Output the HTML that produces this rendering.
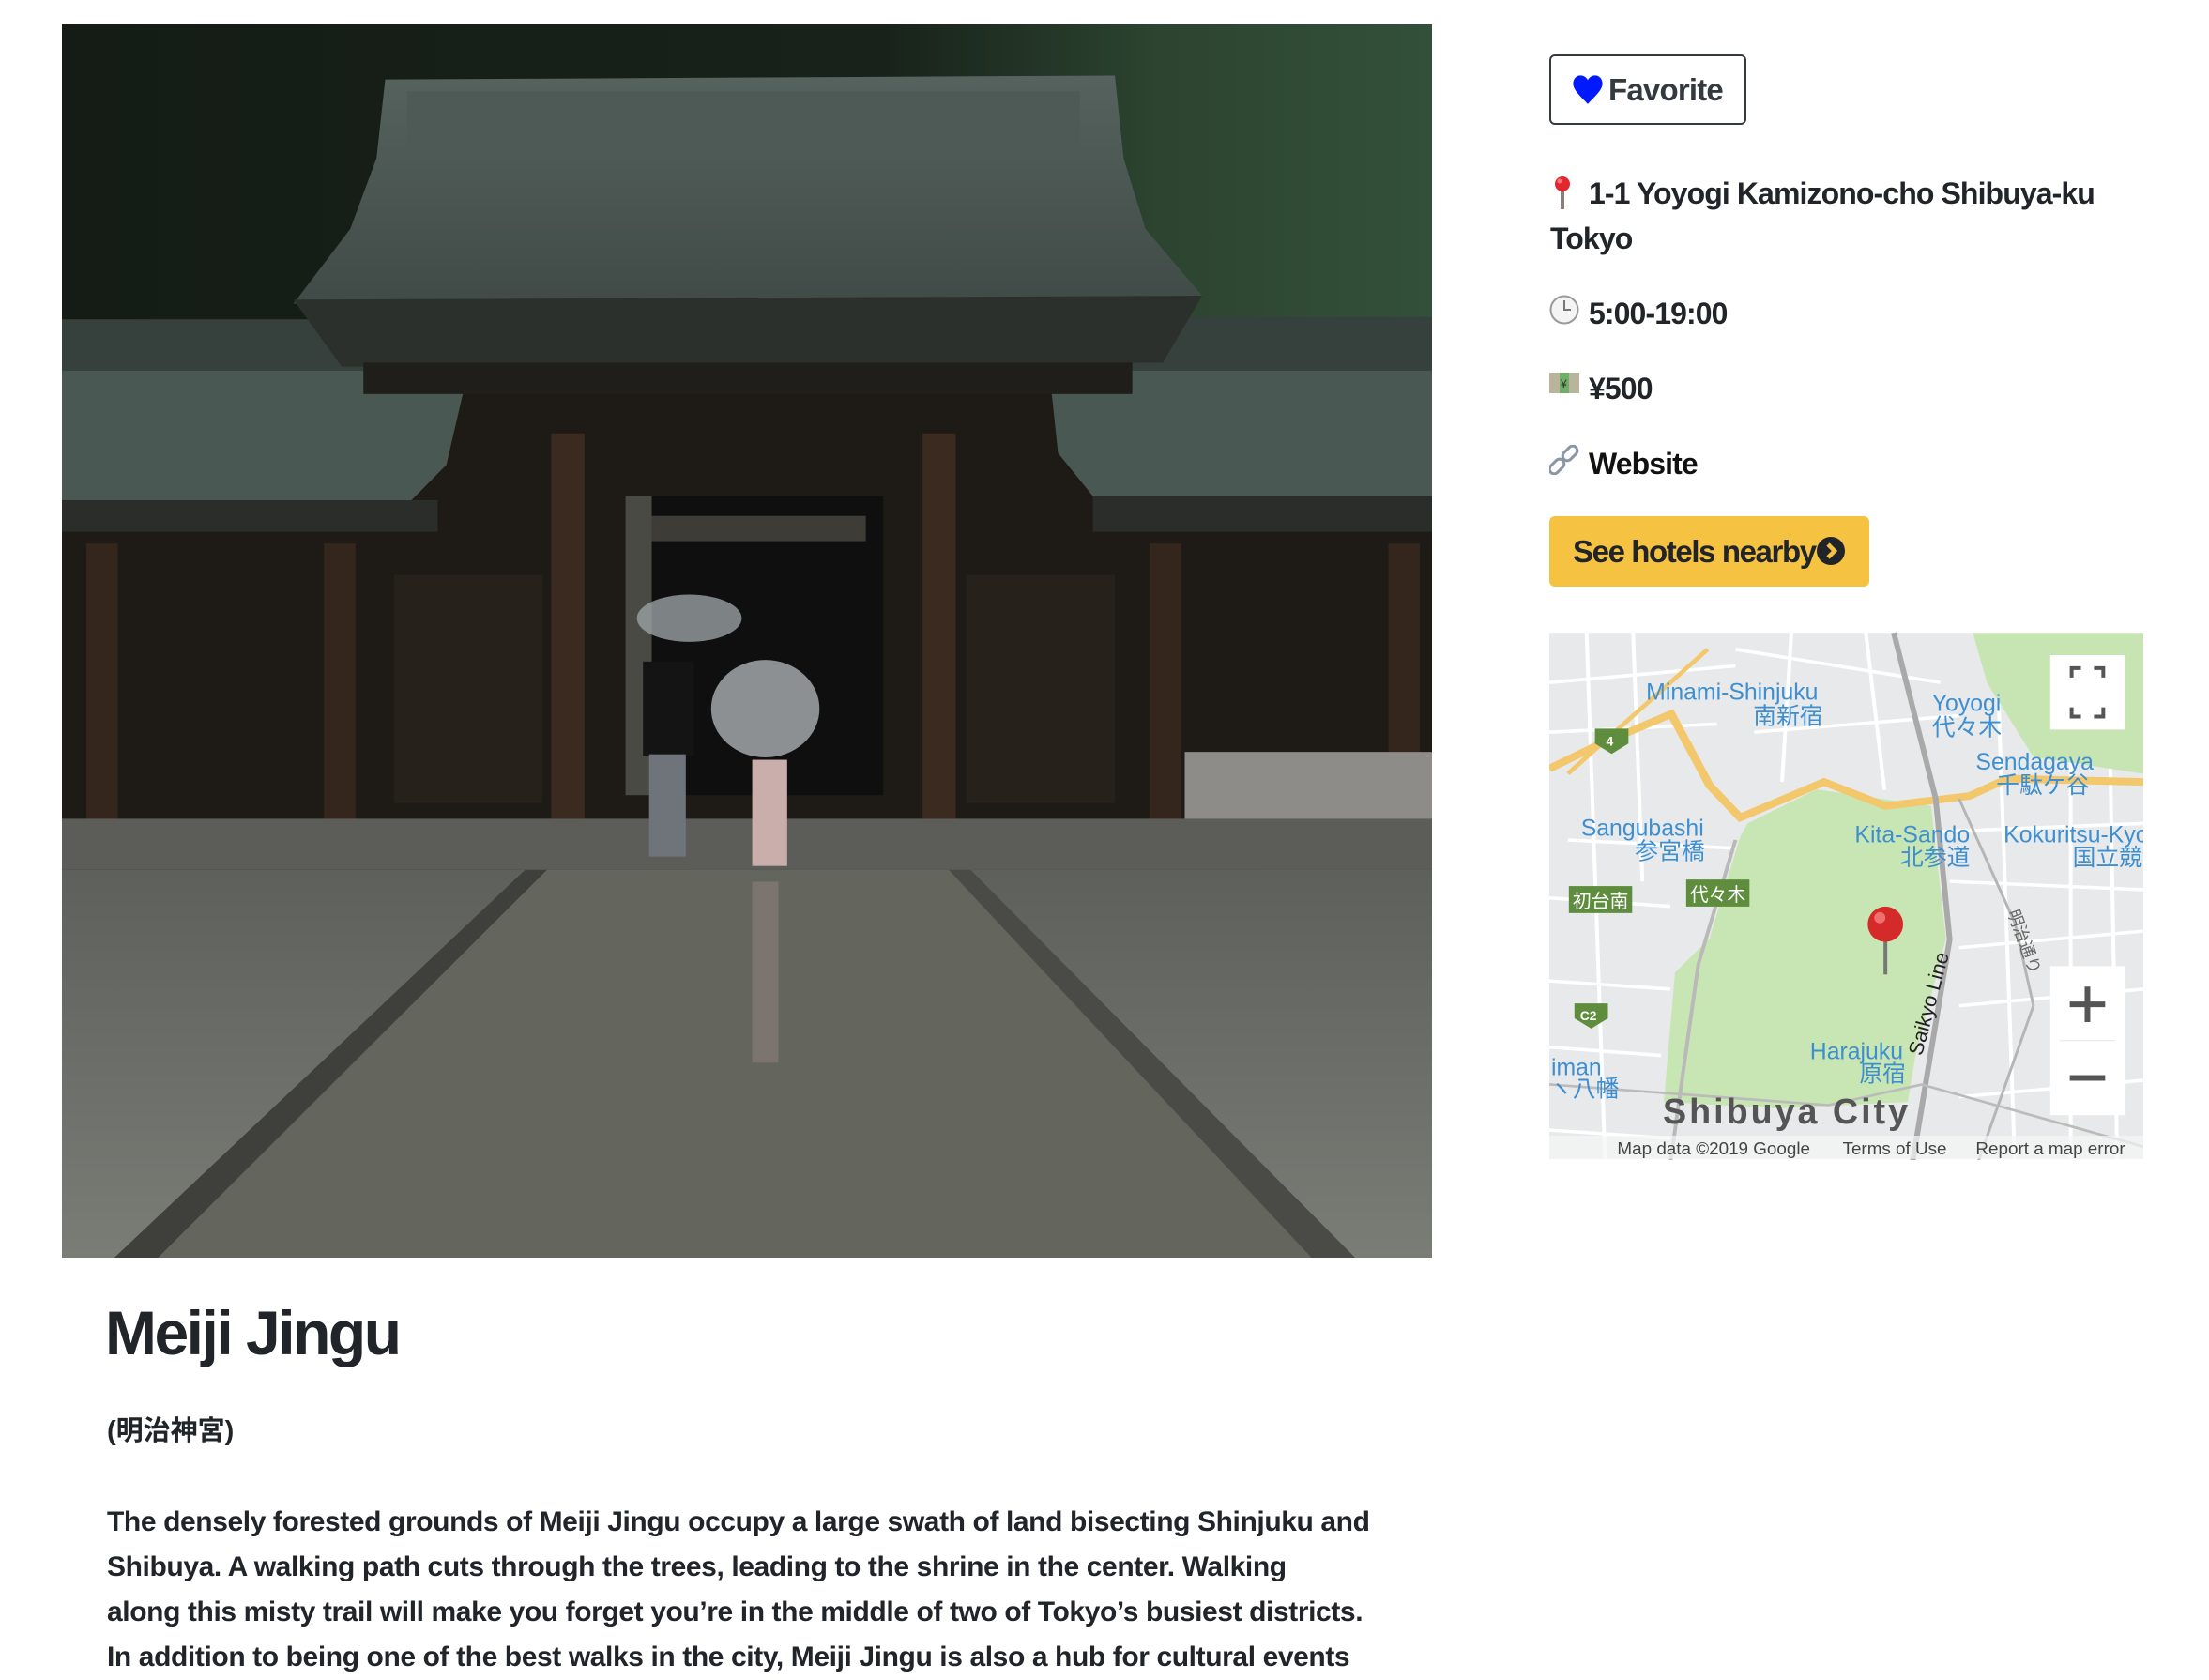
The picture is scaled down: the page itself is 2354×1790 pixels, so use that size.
<!DOCTYPE html>
<html><head><meta charset="utf-8">
<style>
html,body{margin:0;padding:0;background:#fff;}
body{width:2354px;height:1758px;position:relative;overflow:hidden;font-family:"Liberation Sans","Noto Sans CJK JP",sans-serif;color:#212529;}
.abs{position:absolute;}
.row{position:absolute;left:1652px;font-size:32px;font-weight:bold;line-height:48px;white-space:nowrap;letter-spacing:-0.9px;}
.ptext{position:absolute;left:114px;font-size:30px;font-weight:bold;line-height:48px;white-space:nowrap;letter-spacing:-0.4px;color:#212529;}
</style></head><body>

<!-- photo -->
<svg class="abs" style="left:66px;top:26px" width="1460" height="1314" viewBox="0 0 1568 1568" preserveAspectRatio="none">
<defs>
<linearGradient id="trees" x1="0" y1="0" x2="1" y2="0"><stop offset="0" stop-color="#141c15"/><stop offset="0.6" stop-color="#18221a"/><stop offset="0.8" stop-color="#2c4430"/><stop offset="1" stop-color="#33503a"/></linearGradient>
<linearGradient id="roof" x1="0" y1="0" x2="0" y2="1"><stop offset="0" stop-color="#56625e"/><stop offset="1" stop-color="#404b48"/></linearGradient>
<linearGradient id="pave" x1="0" y1="0" x2="0" y2="1"><stop offset="0" stop-color="#5d605b"/><stop offset="1" stop-color="#7a7c76"/></linearGradient>
</defs>
<rect width="1568" height="1568" fill="url(#trees)"/>
<rect x="0" y="430" width="1568" height="600" fill="#1e1b17"/>
<polygon points="0,375 470,375 465,440 0,440" fill="#36403d"/>
<polygon points="1130,372 1568,372 1568,440 1130,440" fill="#36403d"/>
<polygon points="0,440 465,440 440,560 400,605 0,620" fill="#4a5854"/>
<polygon points="1130,440 1568,440 1568,615 1180,600 1140,545" fill="#4a5854"/>
<rect x="0" y="605" width="430" height="40" fill="#2a2d2a"/>
<rect x="1180" y="600" width="388" height="45" fill="#2a2d2a"/>
<polygon points="370,70 1205,65 1215,170 1240,260 1305,345 265,355 330,260 360,170" fill="url(#roof)"/>
<rect x="395" y="85" width="770" height="80" fill="#4d5a55"/>
<polygon points="265,350 1305,345 1260,430 320,435" fill="#2b302d"/>
<rect x="345" y="430" width="880" height="40" fill="#201e1a"/>
<rect x="645" y="600" width="295" height="380" fill="#0e0f0e"/>
<rect x="645" y="600" width="30" height="380" fill="#4a4a44"/>
<rect x="675" y="625" width="245" height="32" fill="#3d3c36"/>
<rect x="560" y="520" width="38" height="490" fill="#3a2a20"/>
<rect x="985" y="520" width="38" height="490" fill="#3a2a20"/>
<rect x="28" y="660" width="36" height="360" fill="#34261d"/>
<rect x="300" y="660" width="36" height="360" fill="#34261d"/>
<rect x="1245" y="660" width="36" height="360" fill="#34261d"/>
<rect x="1518" y="660" width="36" height="360" fill="#34261d"/>
<rect x="380" y="700" width="170" height="290" fill="#27211b"/>
<rect x="1035" y="700" width="170" height="290" fill="#27211b"/>
<rect x="1285" y="925" width="283" height="95" fill="#8d8c88"/>
<rect x="0" y="1010" width="1568" height="65" fill="#5c5d59"/>
<rect x="0" y="1075" width="1568" height="493" fill="url(#pave)"/>
<polygon points="555,1075 1015,1075 1430,1568 110,1568" fill="#64655d"/>
<polygon points="530,1075 555,1075 110,1568 60,1568" fill="#3f403c"/>
<polygon points="1015,1075 1040,1075 1480,1568 1430,1568" fill="#4a4b46"/>
<rect x="790" y="1090" width="30" height="230" fill="#8a7f7c" opacity="0.6"/>
<ellipse cx="718" cy="755" rx="60" ry="30" fill="#9aa0a4" opacity="0.8"/>
<rect x="665" y="810" width="58" height="120" fill="#141414"/>
<rect x="672" y="928" width="42" height="130" fill="#6e747a"/>
<circle cx="805" cy="870" r="62" fill="#b7bcc0" opacity="0.75"/>
<rect x="790" y="935" width="40" height="135" fill="#c9aeac"/>
</svg>

<!-- right panel -->
<div class="abs" style="left:1651px;top:58px;width:206px;height:71px;border:2px solid #343a40;border-radius:6px;box-sizing:content-box;"></div>
<svg class="abs" style="left:1675px;top:79px" width="34" height="34" viewBox="0 0 24 24"><path d="M12 22.5 C6 16 1 12 1 7 C1 3.5 3.5 1 6.5 1 C9 1 11 2.5 12 4.5 C13 2.5 15 1 17.5 1 C20.5 1 23 3.5 23 7 C23 12 18 16 12 22.5Z" fill="#0019ff"/></svg>
<div class="abs" style="left:1714px;top:72px;font-size:33px;font-weight:bold;line-height:48px;color:#343a40;letter-spacing:-0.8px">Favorite</div>

<svg class="abs" style="left:1654px;top:187px" width="22" height="38" viewBox="0 0 22 38"><rect x="9" y="14" width="4" height="22" fill="#8a7f78"/><circle cx="11" cy="9" r="8" fill="#e2272f"/><circle cx="8" cy="6" r="2.5" fill="#f77"/></svg>
<div class="row" style="top:182px;left:1693px">1-1 Yoyogi Kamizono-cho Shibuya-ku</div>
<div class="row" style="top:230px">Tokyo</div>

<svg class="abs" style="left:1651px;top:314px" width="32" height="32" viewBox="0 0 32 32"><circle cx="16" cy="16" r="14.5" fill="#f4f4f4" stroke="#9a9a9a" stroke-width="2"/><path d="M16 6 V16 H23" stroke="#777" stroke-width="2" fill="none"/></svg>
<div class="row" style="top:310px;left:1693px">5:00-19:00</div>

<svg class="abs" style="left:1650px;top:395px" width="34" height="26" viewBox="0 0 34 26"><rect x="1" y="2" width="32" height="22" fill="#b9b59c"/><rect x="12" y="2" width="10" height="22" fill="#6fae66"/><text x="13" y="18" font-size="12" fill="#333" font-family="Liberation Sans">¥</text></svg>
<div class="row" style="top:390px;left:1693px">¥500</div>

<svg class="abs" style="left:1651px;top:474px" width="32" height="32" viewBox="0 0 32 32"><g fill="none" stroke="#8896a6" stroke-width="3"><rect x="3" y="14" width="10" height="18" rx="5" transform="rotate(45 8 23)"/><rect x="17" y="0" width="10" height="18" rx="5" transform="rotate(45 22 9)"/></g></svg>
<div class="row" style="top:470px;left:1693px;color:#111">Website</div>

<div class="abs" style="left:1651px;top:550px;width:341px;height:75px;background:#f5c242;border-radius:6px;"></div>
<div class="abs" style="left:1676px;top:564px;font-size:33px;font-weight:bold;line-height:48px;color:#212529;letter-spacing:-1.4px">See hotels nearby</div>
<svg class="abs" style="left:1936px;top:572px" width="30" height="30" viewBox="0 0 30 30"><circle cx="15" cy="15" r="15" fill="#212529"/><path d="M12 8 L19 15 L12 22" stroke="#f5c242" stroke-width="4.5" fill="none"/></svg>

<!-- map -->
<svg class="abs" style="left:1651px;top:673px" width="633" height="563" viewBox="0 0 638 565" font-family="Liberation Sans, Noto Sans CJK JP, sans-serif">
<rect width="638" height="565" fill="#e8e9ea"/>
<g transform="scale(1,0.89)">
<g stroke="#fff" stroke-width="4" fill="none">
<path d="M0 60 L200 40 M0 120 L180 110 M20 250 L200 260 M0 320 L130 330 M0 420 L130 430 M0 500 L120 510 M0 600 L130 610 M40 0 L60 640 M90 0 L100 300 M420 240 L638 230 M430 300 L638 310 M440 380 L638 360 M440 450 L638 430 M440 560 L638 540 M480 0 L500 640 M560 0 L560 640 M600 0 L610 640 M200 20 L420 60 M220 120 L440 100 M260 0 L250 180 M340 0 L360 190"/>
</g>
<polygon points="455,0 638,0 638,170 520,150 470,60" fill="#c6e5b3"/>
<polygon points="213,230 287,189 410,209 426,369 393,512 385,566 246,574 123,566 135,410 172,369 205,246" fill="#c8e6b3"/>
<path d="M0 164 L53 135 L131 98 L172 184 L205 223 L295 180 L361 209 L451 197 L492 176 L639 180" stroke="#f3c76c" stroke-width="9" fill="none"/>
<path d="M20 170 L170 20" stroke="#f3c76c" stroke-width="5" fill="none"/>
<path d="M370 0 L415 200 L430 370 L390 640" stroke="#a9a9a9" stroke-width="6" fill="none"/>
<path d="M200 250 L160 400 L130 640" stroke="#b9b9b9" stroke-width="4" fill="none"/>
<path d="M440 200 L500 350 L520 450 L460 640" stroke="#b5b5b5" stroke-width="3" fill="none"/>
<path d="M0 545 L300 570 L400 545 L638 620" stroke="#bbb" stroke-width="3" fill="none"/>
</g>
<g fill="#3d8fd1" font-size="25">
<text x="104" y="72">Minami-Shinjuku</text>
<text x="219" y="98">南新宿</text>
<text x="411" y="84">Yoyogi</text>
<text x="411" y="110">代々木</text>
<text x="458" y="147">Sendagaya</text>
<text x="480" y="172">千駄ケ谷</text>
<text x="34" y="218">Sangubashi</text>
<text x="92" y="243">参宮橋</text>
<text x="328" y="225">Kita-Sando</text>
<text x="377" y="250">北参道</text>
<text x="488" y="225">Kokuritsu-Kyo</text>
<text x="562" y="250">国立競</text>
<text x="280" y="458">Harajuku</text>
<text x="333" y="482">原宿</text>
<text x="2" y="475">iman</text>
<text x="0" y="498">ヽ八幡</text>
</g>
<rect x="21" y="272" width="68" height="29" fill="#5e8e3d"/><text x="25" y="295" font-size="20" fill="#fff">初台南</text>
<rect x="147" y="265" width="68" height="29" fill="#5e8e3d"/><text x="151" y="288" font-size="20" fill="#fff">代々木</text>
<path d="M49 103 h36 v16 l-18 11 l-18 -11z" fill="#5e8e3d"/><text x="61" y="121" font-size="14" fill="#fff" font-weight="bold">4</text>
<path d="M27 398 h36 v16 l-18 11 l-18 -11z" fill="#5e8e3d"/><text x="33" y="416" font-size="14" fill="#fff" font-weight="bold">C2</text>
<text x="492" y="300" font-size="18" fill="#666" transform="rotate(70 492 300)">明治通り</text>
<text x="400" y="455" font-size="22" fill="#222" transform="rotate(-75 400 455)">Saikyo Line</text>
<text x="122" y="527" font-size="38" fill="#555" font-weight="bold" letter-spacing="3">Shibuya City</text>
<rect x="538" y="24" width="80" height="80" fill="#fff"/>
<path d="M561 48 v-10 h10 M585 38 h10 v10 M595 80 v10 h-10 M571 90 h-10 v-10" stroke="#555" stroke-width="4" fill="none"/>
<rect x="538" y="358" width="80" height="160" fill="#fff"/>
<path d="M578 380 v38 M559 399 h38" stroke="#555" stroke-width="6"/>
<line x1="548" y1="438" x2="608" y2="438" stroke="#e6e6e6" stroke-width="1"/>
<path d="M559 478 h38" stroke="#555" stroke-width="6"/>
<line x1="361" y1="330" x2="361" y2="367" stroke="#777" stroke-width="4"/>
<circle cx="361" cy="313" r="19" fill="#d42a2a"/><circle cx="355" cy="306" r="6" fill="#f07070"/>
<rect x="0" y="540" width="638" height="25" fill="#f5f5f5" opacity="0.7"/>
<text x="73" y="560" font-size="19" fill="#444">Map data ©2019 Google</text>
<text x="315" y="560" font-size="19" fill="#444">Terms of Use</text>
<text x="458" y="560" font-size="19" fill="#444">Report a map error</text>
</svg>

<!-- main text -->
<div class="abs" style="left:112px;top:1380px;font-size:66px;font-weight:bold;line-height:80px;letter-spacing:-2.5px;color:#212529">Meiji Jingu</div>
<div class="abs" style="left:114px;top:1505px;font-size:29px;font-weight:bold;line-height:40px;color:#212529">(明治神宮)</div>
<div class="ptext" style="top:1598px">The densely forested grounds of Meiji Jingu occupy a large swath of land bisecting Shinjuku and</div>
<div class="ptext" style="top:1646px">Shibuya. A walking path cuts through the trees, leading to the shrine in the center. Walking</div>
<div class="ptext" style="top:1694px">along this misty trail will make you forget you’re in the middle of two of Tokyo’s busiest districts.</div>
<div class="ptext" style="top:1742px">In addition to being one of the best walks in the city, Meiji Jingu is also a hub for cultural events</div>
</body></html>
